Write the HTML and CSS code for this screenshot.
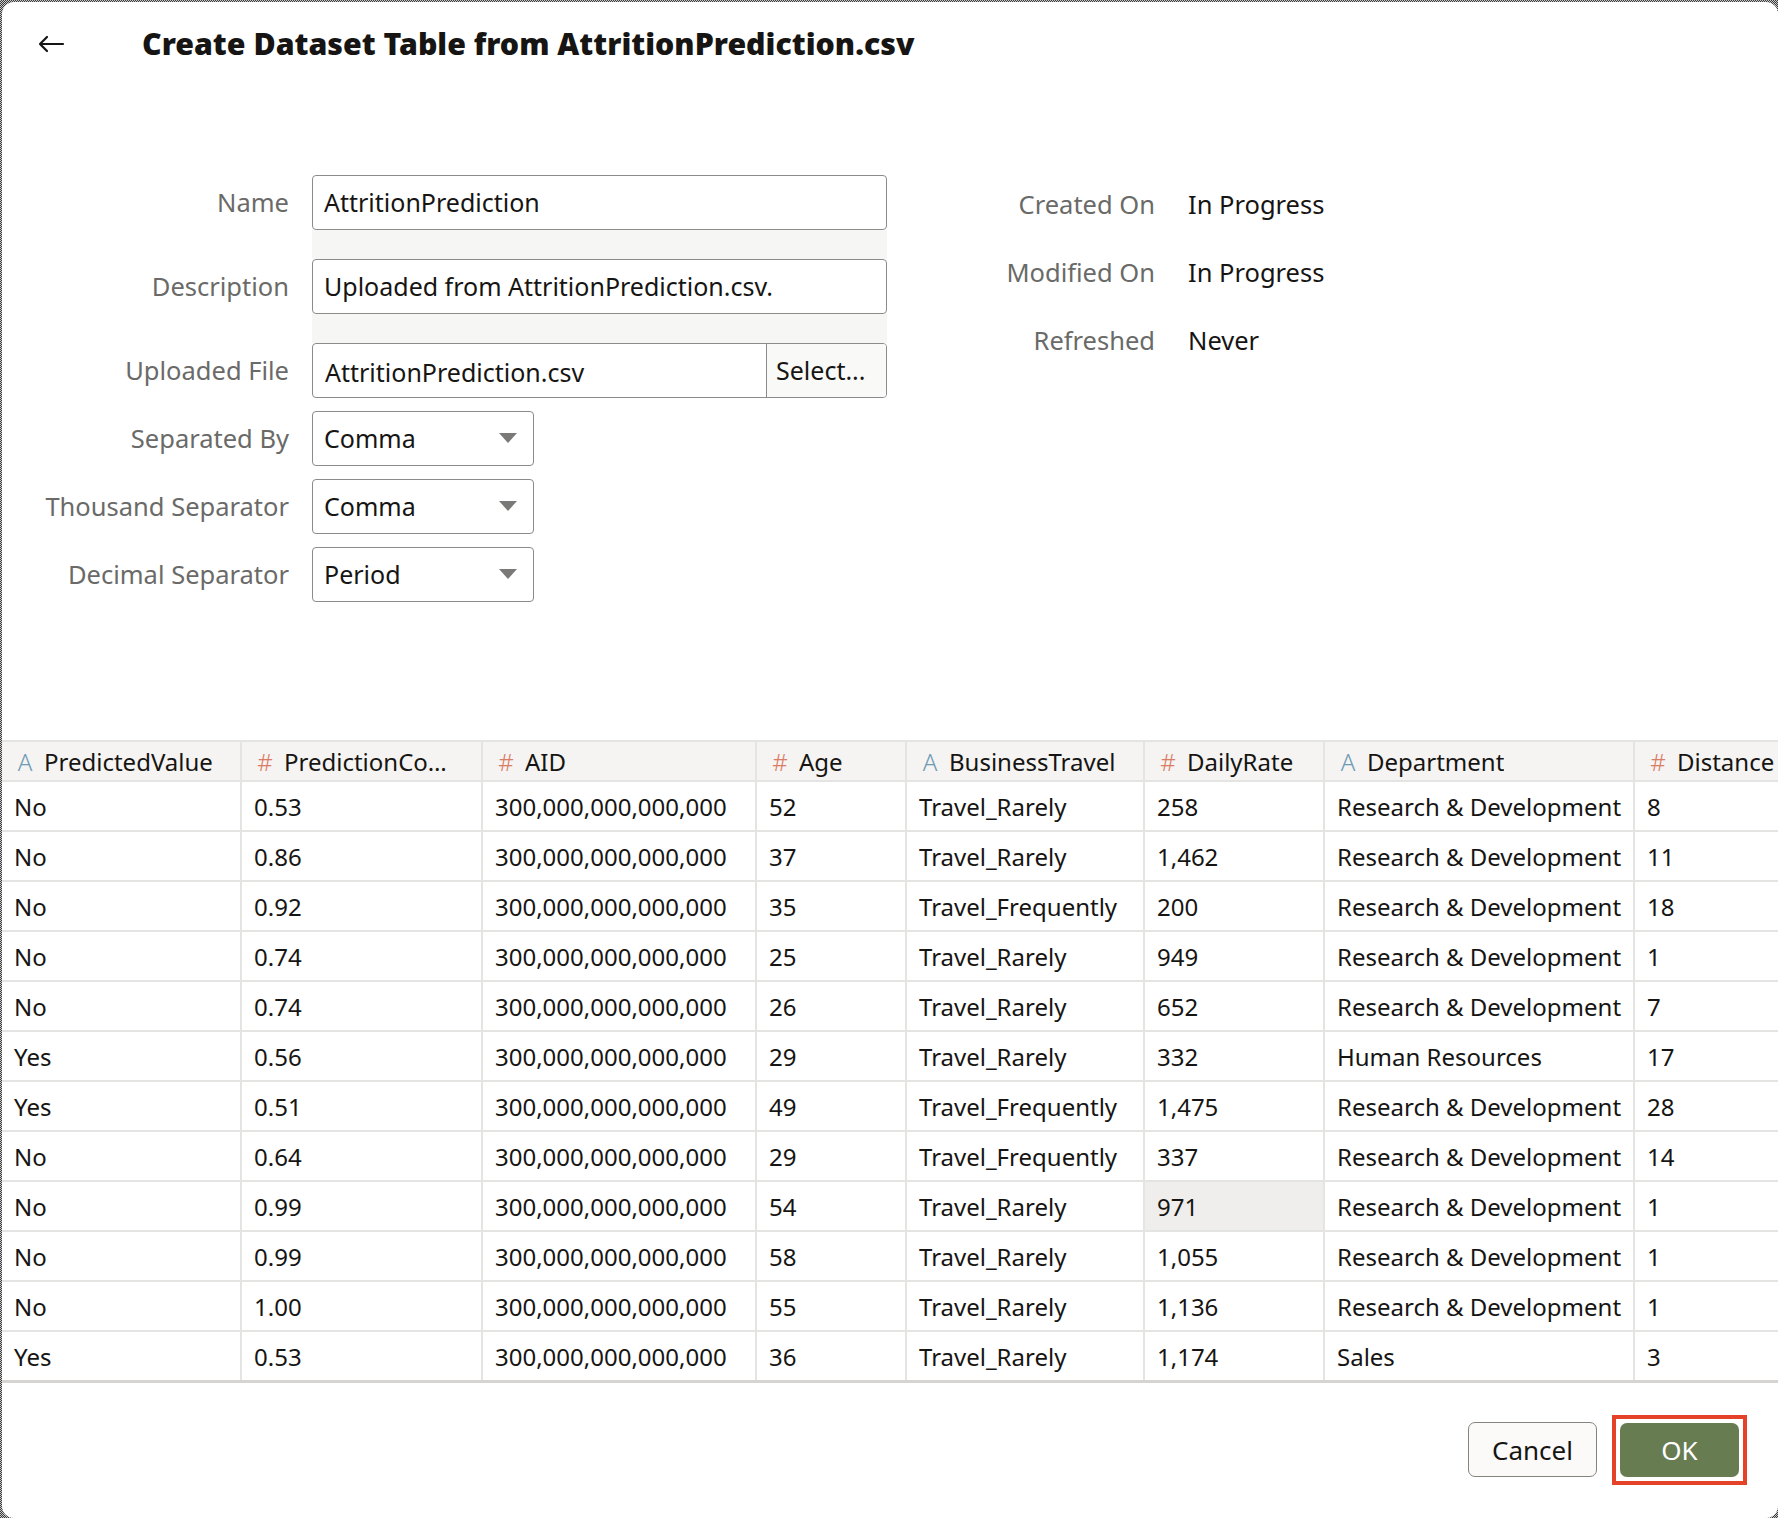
FILE: index.html
```html
<!DOCTYPE html>
<html lang="en">
<head>
<meta charset="utf-8">
<title>Create Dataset Table</title>
<link rel="stylesheet" href="styles.css">
</head>
<body>
<div class="dialog">
  <header class="dlg-header">
    <svg class="back" width="28" height="20" viewBox="0 0 28 20" aria-hidden="true">
      <path d="M26 10H3M10 3L3 10L10 17" fill="none" stroke="#161513" stroke-width="2.2" stroke-linecap="round" stroke-linejoin="round"/>
    </svg>
    <h1 class="title">Create Dataset Table from AttritionPrediction.csv</h1>
  </header>

  <section class="props">
    <div class="form">
      <div class="lbl">Name</div>
      <div class="ctl"><div class="input">AttritionPrediction</div><div class="band"></div></div>

      <div class="lbl">Description</div>
      <div class="ctl"><div class="input">Uploaded from AttritionPrediction.csv.</div><div class="band"></div></div>

      <div class="lbl">Uploaded File</div>
      <div class="ctl gap"><div class="input file"><span class="file-name">AttritionPrediction.csv</span><span class="select-btn">Select...</span></div></div>

      <div class="lbl">Separated By</div>
      <div class="ctl gap"><div class="input select">Comma<span class="caret"></span></div></div>

      <div class="lbl">Thousand Separator</div>
      <div class="ctl gap"><div class="input select">Comma<span class="caret"></span></div></div>

      <div class="lbl">Decimal Separator</div>
      <div class="ctl"><div class="input select">Period<span class="caret"></span></div></div>
    </div>

    <div class="info">
      <div class="info-lbl">Created On</div><div class="info-val">In Progress</div>
      <div class="info-lbl">Modified On</div><div class="info-val">In Progress</div>
      <div class="info-lbl">Refreshed</div><div class="info-val">Never</div>
    </div>
  </section>

  <div class="grid">
    <div class="tr thead">
      <div class="th"><span class="ic txt">A</span><span class="hname">PredictedValue</span></div>
      <div class="th"><span class="ic num">#</span><span class="hname">PredictionConfidence</span></div>
      <div class="th"><span class="ic num">#</span><span class="hname">AID</span></div>
      <div class="th"><span class="ic num">#</span><span class="hname">Age</span></div>
      <div class="th"><span class="ic txt">A</span><span class="hname">BusinessTravel</span></div>
      <div class="th"><span class="ic num">#</span><span class="hname">DailyRate</span></div>
      <div class="th"><span class="ic txt">A</span><span class="hname">Department</span></div>
      <div class="th last"><span class="ic num">#</span><span class="hname">Distance</span></div>
    </div>
    <div class="tr"><div class="td">No</div><div class="td">0.53</div><div class="td">300,000,000,000,000</div><div class="td">52</div><div class="td">Travel_Rarely</div><div class="td">258</div><div class="td">Research &amp; Development</div><div class="td">8</div></div>
    <div class="tr"><div class="td">No</div><div class="td">0.86</div><div class="td">300,000,000,000,000</div><div class="td">37</div><div class="td">Travel_Rarely</div><div class="td">1,462</div><div class="td">Research &amp; Development</div><div class="td">11</div></div>
    <div class="tr"><div class="td">No</div><div class="td">0.92</div><div class="td">300,000,000,000,000</div><div class="td">35</div><div class="td">Travel_Frequently</div><div class="td">200</div><div class="td">Research &amp; Development</div><div class="td">18</div></div>
    <div class="tr"><div class="td">No</div><div class="td">0.74</div><div class="td">300,000,000,000,000</div><div class="td">25</div><div class="td">Travel_Rarely</div><div class="td">949</div><div class="td">Research &amp; Development</div><div class="td">1</div></div>
    <div class="tr"><div class="td">No</div><div class="td">0.74</div><div class="td">300,000,000,000,000</div><div class="td">26</div><div class="td">Travel_Rarely</div><div class="td">652</div><div class="td">Research &amp; Development</div><div class="td">7</div></div>
    <div class="tr"><div class="td">Yes</div><div class="td">0.56</div><div class="td">300,000,000,000,000</div><div class="td">29</div><div class="td">Travel_Rarely</div><div class="td">332</div><div class="td">Human Resources</div><div class="td">17</div></div>
    <div class="tr"><div class="td">Yes</div><div class="td">0.51</div><div class="td">300,000,000,000,000</div><div class="td">49</div><div class="td">Travel_Frequently</div><div class="td">1,475</div><div class="td">Research &amp; Development</div><div class="td">28</div></div>
    <div class="tr"><div class="td">No</div><div class="td">0.64</div><div class="td">300,000,000,000,000</div><div class="td">29</div><div class="td">Travel_Frequently</div><div class="td">337</div><div class="td">Research &amp; Development</div><div class="td">14</div></div>
    <div class="tr"><div class="td">No</div><div class="td">0.99</div><div class="td">300,000,000,000,000</div><div class="td">54</div><div class="td">Travel_Rarely</div><div class="td hover">971</div><div class="td">Research &amp; Development</div><div class="td">1</div></div>
    <div class="tr"><div class="td">No</div><div class="td">0.99</div><div class="td">300,000,000,000,000</div><div class="td">58</div><div class="td">Travel_Rarely</div><div class="td">1,055</div><div class="td">Research &amp; Development</div><div class="td">1</div></div>
    <div class="tr"><div class="td">No</div><div class="td">1.00</div><div class="td">300,000,000,000,000</div><div class="td">55</div><div class="td">Travel_Rarely</div><div class="td">1,136</div><div class="td">Research &amp; Development</div><div class="td">1</div></div>
    <div class="tr lastrow"><div class="td">Yes</div><div class="td">0.53</div><div class="td">300,000,000,000,000</div><div class="td">36</div><div class="td">Travel_Rarely</div><div class="td">1,174</div><div class="td">Sales</div><div class="td">3</div></div>
  </div>

  <footer class="dlg-footer">
    <button class="btn cancel" type="button">Cancel</button>
    <span class="focus-ring"><button class="btn ok" type="button">OK</button></span>
  </footer>
</div>
</body>
</html>
```

FILE: styles.css
```css
* { box-sizing: border-box; }

html, body {
  margin: 0;
  padding: 0;
  width: 1778px;
  height: 1518px;
  overflow: hidden;
}

body {
  background: repeating-conic-gradient(#3a3a3a 0% 25%, #c8c8c8 0% 50%) 0 0 / 2px 2px;
  font-family: "Noto Sans", "Open Sans", sans-serif;
  color: #161513;
}

.dialog {
  margin: 2px 0 0 2px;
  width: 1776px;
  height: 1516px;
  background: #fff;
  border-radius: 12px;
  overflow: hidden;
  display: flex;
  flex-direction: column;
}

/* header */
.dlg-header {
  height: 84px;
  flex: none;
  display: flex;
  align-items: center;
  padding-left: 35px;
  gap: 77px;
}
.back { flex: none; }
.title {
  margin: 0;
  font-size: 30.3px;
  font-weight: 900;
  line-height: 1;
  color: #161513;
  white-space: nowrap;
}

/* properties */
.props {
  flex: none;
  margin-top: 84px;
  display: flex;
  align-items: flex-start;
  height: 431px;
  margin-bottom: 139px;
}
.form {
  padding-left: 39px;
  padding-top: 5px;
  display: grid;
  grid-template-columns: 248px 575px;
  column-gap: 23px;
  align-items: start;
}
.lbl {
  font-size: 25.5px;
  line-height: 55px;
  text-align: right;
  color: #6a6a68;
  white-space: nowrap;
}
.ctl.gap { margin-bottom: 13px; }
.input {
  height: 55px;
  border: 1.5px solid #8c8b89;
  border-radius: 4px;
  font-size: 25px;
  line-height: 53px;
  padding-left: 11px;
  background: #fff;
  color: #161513;
  white-space: nowrap;
  overflow: hidden;
}
.band {
  height: 29px;
  background: #f6f6f5;
}
.input.file {
  display: flex;
  padding-left: 0;
}
.file-name {
  flex: 1;
  padding-left: 12px;
  padding-top: 2px;
}
.select-btn {
  flex: none;
  width: 120px;
  border-left: 1.5px solid #8c8b89;
  background: #f9f9f8;
  padding-left: 9px;
}
.input.select {
  width: 222px;
  position: relative;
}
.caret {
  position: absolute;
  right: 16px;
  top: 21px;
  width: 0;
  height: 0;
  border-left: 9px solid transparent;
  border-right: 9px solid transparent;
  border-top: 10px solid #7a7977;
}

.info {
  display: grid;
  grid-template-columns: 268px auto;
  column-gap: 33px;
}
.info-lbl, .info-val {
  font-size: 25.5px;
  line-height: 68px;
  white-space: nowrap;
}
.info-lbl { text-align: right; color: #6a6a68; }
.info-val { color: #161513; }

/* grid */
.grid {
  flex: none;
  width: 1933px;
}
.tr {
  display: grid;
  grid-template-columns: 240px 241px 274px 150px 238px 180px 310px 300px;
  height: 50px;
  border-bottom: 2px solid #e4e4e3;
}
.tr.thead {
  height: 42px;
  border-top: 2px solid #e4e4e3;
  background: #f5f4f2;
}
.tr.lastrow {
  border-bottom: 3px solid #d5d4d2;
  height: 51px;
}
.th, .td {
  border-right: 2px solid #e4e4e3;
  display: flex;
  align-items: center;
  white-space: nowrap;
  overflow: hidden;
}
.th {
  font-size: 24px;
  padding-left: 14px;
  padding-right: 24px;
}
.th.last { border-right: none; padding-right: 0; }
.ic {
  flex: none;
  width: 18px;
  margin-right: 10px;
  font-size: 24px;
  font-weight: 300;
  text-align: center;
}
.ic.txt { color: #6f9bb5; }
.ic.num { color: #da7b63; }
.hname {
  overflow: hidden;
  text-overflow: ellipsis;
  min-width: 0;
}
.th.last .hname { overflow: visible; }
.td {
  font-size: 24px;
  padding-left: 12px;
}
.td.hover { background: #efeeec; }

/* footer */
.dlg-footer {
  flex: 1;
  display: flex;
  align-items: center;
  justify-content: flex-end;
  padding-right: 31px;
  padding-bottom: 2px;
  gap: 15px;
}
.btn {
  font-family: "Noto Sans", "Open Sans", sans-serif;
  font-size: 26px;
  border-radius: 7px;
  cursor: pointer;
}
.cancel {
  width: 129px;
  height: 55px;
  background: #fbfaf9;
  border: 1.5px solid #85847f;
  color: #161513;
}
.focus-ring {
  display: flex;
  border: 4px solid #e4432a;
  padding: 4px;
}
.ok {
  width: 119px;
  height: 54px;
  background: #687c52;
  border: none;
  color: #fff;
}
```
